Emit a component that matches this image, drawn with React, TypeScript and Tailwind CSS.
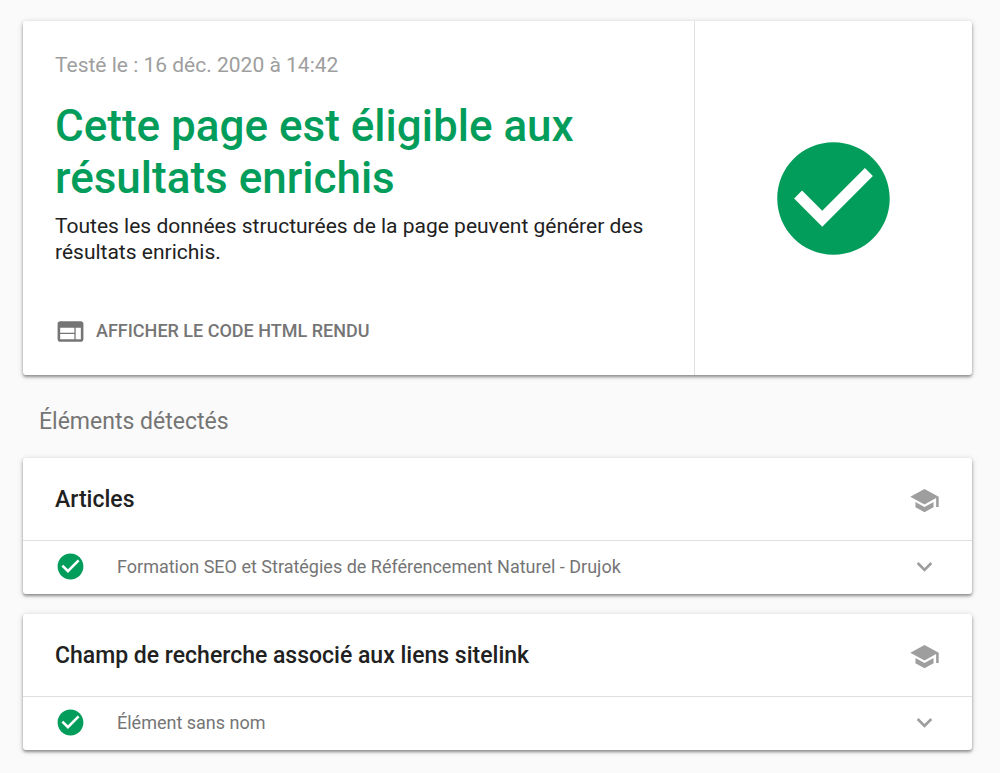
import type { ReactNode } from "react";
import { MdCheckCircle, MdExpandMore, MdSchool, MdWeb } from "react-icons/md";

type DetectedItem = {
  title: string;
  entries: string[];
};

const items: DetectedItem[] = [
  {
    title: "Articles",
    entries: ["Formation SEO et Stratégies de Référencement Naturel - Drujok"],
  },
  {
    title: "Champ de recherche associé aux liens sitelink",
    entries: ["Élément sans nom"],
  },
];

function Card({ children }: { children: ReactNode }) {
  return (
    <section className="rounded-[3px] bg-white shadow-[0_1px_6px_rgba(0,0,0,0.16),0_2px_3px_rgba(0,0,0,0.36)]">
      {children}
    </section>
  );
}

function ResultCard() {
  return (
    <Card>
      <div className="flex">
        <div className="flex-1 px-8 pt-8 pb-7">
          <p className="text-[21px] leading-6 text-[#9e9e9e]">Testé le : 16 déc. 2020 à 14:42</p>
          <h1 className="mt-[23px] text-[44px] leading-[52px] font-medium text-[#039d5b]">
            Cette page est éligible aux résultats enrichis
          </h1>
          <p className="mt-[9px] text-[21px] leading-[26px] text-[#212121]">
            Toutes les données structurées de la page peuvent générer des résultats enrichis.
          </p>
          <button
            type="button"
            className="mt-[50px] flex items-center gap-2.5 text-[18px] leading-8 font-medium text-[#757575] uppercase"
          >
            <MdWeb className="size-[31px]" />
            Afficher le code HTML rendu
          </button>
        </div>
        <div className="flex w-[278px] shrink-0 items-center justify-center border-l border-[#e0e0e0]">
          <MdCheckCircle className="size-[135px] text-[#039d5b]" />
        </div>
      </div>
    </Card>
  );
}

function DetectedCard({ title, entries }: DetectedItem) {
  return (
    <Card>
      <div className="flex h-[82px] items-center justify-between px-8 pt-0.5">
        <h3 className="text-[23px] leading-8 font-medium text-[#212121]">{title}</h3>
        <button type="button" aria-label="En savoir plus">
          <MdSchool className="size-[31px] text-[#9e9e9e]" />
        </button>
      </div>
      {entries.map((entry) => (
        <button
          key={entry}
          type="button"
          className="flex h-[54px] w-full items-center border-t border-[#e0e0e0] px-8 pb-0.5 text-left"
        >
          <MdCheckCircle className="size-[31px] shrink-0 text-[#039d5b]" />
          <span className="ml-[31px] flex-1 text-[18px] leading-6 text-[#757575]">{entry}</span>
          <MdExpandMore className="size-[31px] shrink-0 text-[#9e9e9e]" />
        </button>
      ))}
    </Card>
  );
}

export default function App() {
  return (
    <main className="min-h-screen bg-[#fafafa] pt-[21px] pr-7 pb-[23px] pl-[23px] font-['Roboto',sans-serif]">
      <ResultCard />
      <h2 className="mt-[33px] mb-[22px] pl-4 text-[23px] leading-7 text-[#757575]">Éléments détectés</h2>
      <div className="flex flex-col gap-5">
        {items.map((item) => (
          <DetectedCard key={item.title} {...item} />
        ))}
      </div>
    </main>
  );
}
